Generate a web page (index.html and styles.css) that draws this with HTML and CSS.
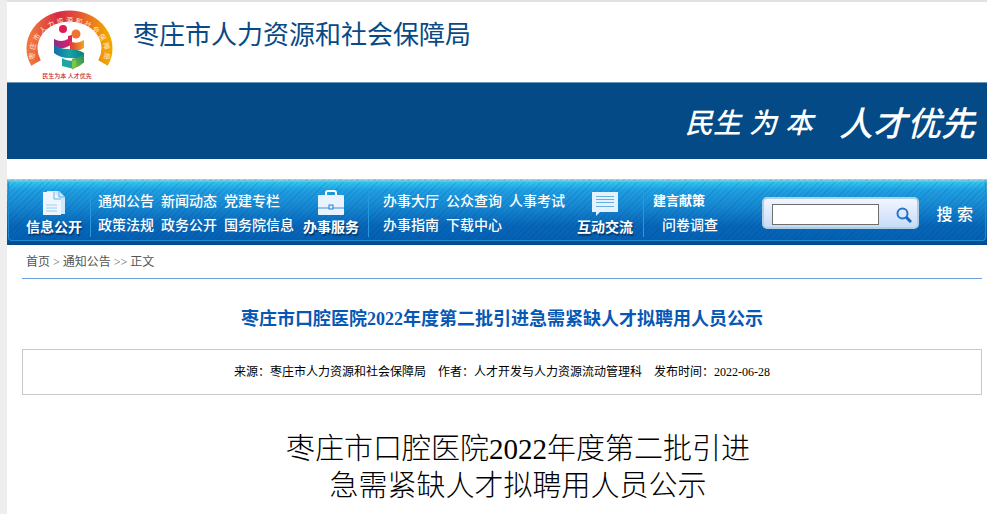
FILE: index.html
```html
<!DOCTYPE html>
<html lang="zh-CN">
<head>
<meta charset="utf-8">
<meta name="viewport" content="width=device-width, initial-scale=1">
<title>枣庄市人力资源和社会保障局</title>
<link rel="stylesheet" href="styles.css">
</head>
<body>
<div class="page">
  <header class="brand">
    <svg class="logo" viewBox="0 0 90 72" role="img" aria-label="枣庄市人力资源和社会保障局">
      <defs>
        <linearGradient id="ring" x1="0" x2="1" y1="0" y2="0">
          <stop offset="0" stop-color="#f0743c"/><stop offset=".35" stop-color="#d62a44"/>
          <stop offset=".6" stop-color="#e4503a"/><stop offset="1" stop-color="#f2a500"/>
        </linearGradient>
        <linearGradient id="teal" x1="0" x2="1"><stop offset="0" stop-color="#176ba8"/><stop offset=".5" stop-color="#14a4a4"/><stop offset="1" stop-color="#087d8b"/></linearGradient>
        <linearGradient id="green" x1="0" x2="1" y1="1" y2="0"><stop offset="0" stop-color="#8bc83e"/><stop offset="1" stop-color="#138a6a"/></linearGradient>
        <linearGradient id="pink" x1="0" x2="1"><stop offset="0" stop-color="#8c2c8c"/><stop offset="1" stop-color="#e3205c"/></linearGradient>
        <linearGradient id="gold" x1="0" x2="1"><stop offset="0" stop-color="#d93a3c"/><stop offset="1" stop-color="#f5a51c"/></linearGradient>
        <path id="arc" d="M12 54A35 30 0 1 1 77 54"/>
      </defs>
      <path d="M11 53A37.500 32.500 0 1 1 78 53" fill="none" stroke="url(#ring)" stroke-width="11"/>
      <text class="logo-ring" text-anchor="middle"><textPath href="#arc" startOffset="50%">枣 庄 市 人 力 资 源 和 社 会 保 障 局</textPath></text>
      <circle cx="38" cy="19" r="4" fill="#e31b55"/>
      <circle cx="51" cy="24" r="4.500" fill="#ef742f"/>
      <path d="M29 29q7 4 14 0v-3l4-1v9q-8 6-18 4z" fill="url(#pink)"/>
      <path d="M45 31q6 4 14-1v8q-7 5-14 1z" fill="url(#gold)"/>
      <path d="M29 35q6 4 14 4 10 0 16 4v10q-6-5-15-5-9 0-15-5z" fill="url(#teal)"/>
      <path d="M59 43v9q-4 5-12 7v-10q8-1 12-6z" fill="url(#green)"/>
      <path d="M37 48q4 3 13 3l-1 8-12-3z" fill="#1fa6a0"/>
      <path d="M47 51l4-1v6l-4 4z" fill="#80c641"/>
      <text class="logo-motto" x="42" y="68" text-anchor="middle">民生为本 人才优先</text>
    </svg>
    <h1 class="bureau">枣庄市人力资源和社会保障局</h1>
  </header>

  <div class="banner">
    <p class="slogan"><span>民生</span><span>为</span><span>本</span><span class="slogan-big">人才优先</span></p>
  </div>

  <nav class="nav" aria-label="主导航">
    <div class="nav-inner">
      <a class="category" href="#">
        <svg class="icon" viewBox="0 0 26 26" aria-hidden="true">
          <path d="M6 1h12l6 6v17H6z" fill="#cfe9fc"/>
          <path d="M2 2h11l7 7v16H2z" fill="#eef7ff"/>
          <path d="M13 2v7h7M18 1v6h6" fill="none" stroke="#67b5e8"/>
          <path d="M5 15h11M5 18h11M5 21h11" stroke="#9acdf0"/>
        </svg>
        <span>信息公开</span>
      </a>
      <div class="links first">
        <div><a href="#">通知公告</a><a href="#">新闻动态</a><a href="#">党建专栏</a></div>
        <div><a href="#">政策法规</a><a href="#">政务公开</a><a href="#">国务院信息</a></div>
      </div>
      <a class="category" href="#">
        <svg class="icon" viewBox="0 0 26 26" aria-hidden="true">
          <path d="M8 6V3q0-2 2-2h6q2 0 2 2v3" fill="none" stroke="#fff" stroke-width="2"/>
          <rect y="5" width="26" height="20" rx="1" fill="#e8f3ff"/>
          <path d="M0 18h26" stroke="#3c91d4"/>
          <rect x="11" y="15" width="4" height="4" fill="#d8ecff" stroke="#2b82c8"/>
        </svg>
        <span>办事服务</span>
      </a>
      <div class="links second">
        <div><a href="#">办事大厅</a><a href="#">公众查询</a><a href="#">人事考试</a></div>
        <div><a href="#">办事指南</a><a href="#">下载中心</a></div>
      </div>
      <a class="category" href="#">
        <svg class="icon" viewBox="0 0 26 26" aria-hidden="true">
          <path d="M0 2h26v20H8l-4 4v-4H0z" fill="#e4f2ff"/>
          <path d="M4 6.500h18M4 9.500h18M4 12.500h18M4 16.500h18" stroke="#6aafe2"/>
        </svg>
        <span>互动交流</span>
      </a>
      <div class="links third">
        <div><a class="small" href="#">建言献策</a></div>
        <div class="indented"><a href="#">问卷调查</a></div>
      </div>
      <form class="search">
        <div class="search-box">
          <input type="text" aria-label="搜索内容">
          <svg class="lens" viewBox="0 0 16 16" aria-hidden="true">
            <circle cx="6.500" cy="6.500" r="5" fill="none" stroke="#2374cc" stroke-width="2"/>
            <path d="M10 10l5 5" stroke="#1768c4" stroke-width="3"/>
          </svg>
        </div>
        <button type="button">搜 索</button>
      </form>
    </div>
  </nav>

  <main class="content">
    <div class="crumbs"><a href="#">首页</a> &gt; <a href="#">通知公告</a> &gt;&gt; <span>正文</span></div>
    <h2 class="title">枣庄市口腔医院2022年度第二批引进急需紧缺人才拟聘用人员公示</h2>
    <p class="meta"><span>来源：枣庄市人力资源和社会保障局</span><span>作者：人才开发与人力资源流动管理科</span><span>发布时间：2022-06-28</span></p>
    <article class="article">
      <p>枣庄市口腔医院2022年度第二批引进<br>急需紧缺人才拟聘用人员公示</p>
    </article>
  </main>
</div>
</body>
</html>
```
FILE: styles.css
```css
* { box-sizing: border-box; }
body {
  margin: 0;
  min-height: 100vh;
  background: #fff;
  border-left: 7px solid #eee;
  font-family: "Liberation Sans", "Noto Sans CJK SC", sans-serif;
}
h1, h2, p { margin: 0; }
a { color: inherit; text-decoration: none; }
.page { border-top: 2px solid #e1e1e1; }

.brand {
  display: flex;
  align-items: flex-start;
  gap: 18px;
  height: 80px;
  padding: 8px 18px 0;
}
.logo { width: 90px; height: 72px; flex: none; }
.logo-ring { font-size: 7px; fill: #ffe9dc; }
.logo-motto { font-size: 6px; font-weight: 500; fill: #c4263a; }
.bureau {
  color: #084a86;
  font-size: 26px;
  font-weight: 400;
  line-height: 50px;
  white-space: nowrap;
}

.banner {
  display: flex;
  align-items: center;
  justify-content: flex-end;
  height: 77px;
  padding: 6px 12px 0 0;
  background: #034a86;
  border-top: 1px solid #6d96ba;
}
.slogan {
  display: flex;
  align-items: center;
  gap: 8px;
  color: #fff;
  font-size: 28px;
  font-style: italic;
  font-weight: 500;
  line-height: 36px;
  white-space: nowrap;
}
.slogan-big { margin-left: 18px; font-size: 34px; }

.nav {
  margin-top: 20px;
  padding: 2px 1px 4px;
  background: repeating-linear-gradient(135deg, rgba(0, 50, 110, .12) 0 1px, transparent 1px 4px),
    linear-gradient(#9fd8e6 0 1px, #55b5d8 2px, #1780c4 40%, #044a90);
}
.nav-inner {
  display: flex;
  align-items: center;
  height: 60px;
  padding: 4px 12px 0 16px;
  border: 1px solid #1c8cd2;
  border-top-color: #35d8f4;
  border-radius: 4px;
  background: repeating-linear-gradient(135deg, rgba(0, 50, 110, .13) 0 1px, transparent 1px 4px),
    linear-gradient(#2fc8f0, #209fe2 14%, #1688d2 42%, #0766b8 75%, #0560b2);
  color: #fff;
  font-size: 14px;
  white-space: nowrap;
}
.category {
  display: flex;
  flex: none;
  flex-direction: column;
  align-items: center;
  width: 58px;
  padding-top: 1px;
  font-weight: 700;
  line-height: 22px;
  text-shadow: 1px 2px 1px #06396f;
}
.icon { width: 26px; height: 26px; }
.links {
  flex: none;
  line-height: 24px;
  font-weight: 500;
}
.links div { display: flex; gap: 7px; }
.first, .second, .third {
  border-left: 1px solid #229be0;
  padding-left: 7px;
}
.first { width: 212px; margin-left: 7px; }
.second { width: 208px; margin-left: 8px; padding-left: 14px; }
.third { width: 119px; margin-left: 9px; padding-left: 9px; }
.small { font-size: 13px; font-weight: 700; }
.links .indented { padding-left: 9px; }
.search {
  display: flex;
  flex: 1;
  align-items: center;
  justify-content: space-between;
  gap: 16px;
}
.search-box {
  display: flex;
  align-items: center;
  justify-content: space-between;
  width: 157px;
  height: 32px;
  padding: 3px 5px 0 8px;
  border: 2px solid #afcfe0;
  border-radius: 5px;
  background: linear-gradient(#f2f5ff, #c7dcf8);
}
.search input {
  width: 107px;
  height: 21px;
  padding: 1px 4px;
  border: 1px solid #6f6f6f;
  background: #fff;
  font-size: 13px;
}
.lens { width: 16px; height: 16px; }
.search button {
  padding: 0;
  border: 0;
  background: none;
  color: #fff;
  font: 500 16px "Liberation Sans", "Noto Sans CJK SC", sans-serif;
}

.content { padding: 0 5px 0 15px; }
.crumbs {
  height: 34px;
  padding-left: 4px;
  border-bottom: 1px solid #6a9fe0;
  color: #555;
  font-family: "Liberation Serif", "Noto Sans CJK SC", serif;
  font-size: 12px;
  line-height: 34px;
}
.title {
  margin-top: 26px;
  color: #0758b5;
  font-family: "Liberation Serif", "Noto Sans CJK SC", serif;
  font-size: 18px;
  font-weight: 700;
  line-height: 28px;
  text-align: center;
}
.meta {
  display: flex;
  justify-content: center;
  gap: 12px;
  margin-top: 16px;
  border: 1px solid #c9c9c9;
  color: #000;
  font-family: "Liberation Serif", "Noto Sans CJK SC", serif;
  font-size: 12px;
  line-height: 44px;
}
.article {
  padding: 36px 0 0 32px;
  color: #000;
  font-family: "Liberation Serif", "Noto Sans CJK SC", serif;
  font-size: 29px;
  font-weight: 300;
  line-height: 37px;
  text-align: center;
}
```
